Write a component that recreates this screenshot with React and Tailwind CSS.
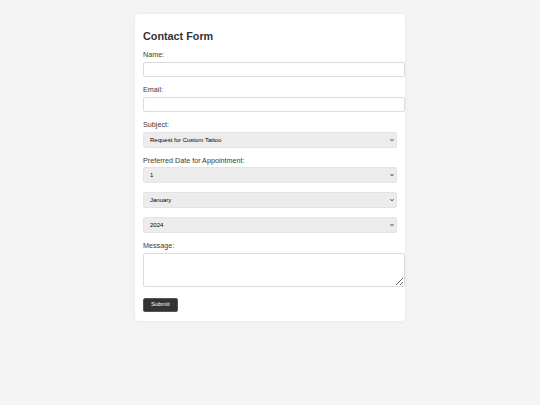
import React from "react";

const labelCls = "block text-[7.2px] leading-[8.3px] text-[#3a3a3a] mb-[2.5px]";
const inputCls = "block w-[262px] h-[15px] bg-white border border-[#dcdcdc] rounded-[2px] mb-[9px] outline-none";
const selectCls = "block appearance-none w-[254px] h-[16px] bg-[#ececec] border border-[#e4e4e4] rounded-[2px] text-[6px] leading-[14px] text-black pl-[6px] pr-[10px] outline-none";

function Select({ children, defaultValue }) {
  return (
    <div className="relative w-[254px] mb-[9px]">
      <select className={selectCls} defaultValue={defaultValue}>{children}</select>
      <svg className="absolute right-[3px] top-[6px] pointer-events-none" width="4" height="4" viewBox="0 0 8 8">
        <path d="M1 2.5 L4 5.5 L7 2.5" fill="none" stroke="#222" strokeWidth="2" />
      </svg>
    </div>
  );
}

export default function App() {
  const days = Array.from({ length: 31 }, (_, i) => i + 1);
  const months = ["January","February","March","April","May","June","July","August","September","October","November","December"];
  return (
    <div className="w-[540px] h-[405px] bg-[#f4f4f4] pt-[13.5px] font-['Liberation_Sans',Arial,sans-serif] text-[#333]">
      <div className="ml-[135px] w-[270px] bg-white rounded-[4px] shadow-[0_0_4px_rgba(0,0,0,0.06)] px-[8px] pt-[7.5px] pb-[8.5px]">
        <h2 className="text-[10.8px] leading-[12.4px] font-bold text-[#333] mt-[9px] mb-[8.8px]">Contact Form</h2>
        <label className={labelCls}>Name:</label>
        <input type="text" className={inputCls} />
        <label className={labelCls}>Email:</label>
        <input type="email" className={inputCls} />
        <label className={labelCls}>Subject:</label>
        <Select defaultValue="Request for Custom Tattoo">
          <option>Request for Custom Tattoo</option>
          <option>General Inquiry</option>
        </Select>
        <label className={labelCls}>Preferred Date for Appointment:</label>
        <Select defaultValue="1">
          {days.map((d) => <option key={d} value={d}>{d}</option>)}
        </Select>
        <Select defaultValue="January">
          {months.map((m) => <option key={m} value={m}>{m}</option>)}
        </Select>
        <Select defaultValue="2024">
          <option value="2024">2024</option>
          <option value="2025">2025</option>
        </Select>
        <label className={labelCls}>Message:</label>
        <textarea className="block w-[262px] h-[34px] bg-white border border-[#dcdcdc] rounded-[2px] mb-[10.4px] outline-none resize-y" />
        <button className="block w-[34.5px] h-[14.7px] bg-[#333] text-white text-[6px] rounded-[2px] border border-[#555]">Submit</button>
      </div>
    </div>
  );
}
